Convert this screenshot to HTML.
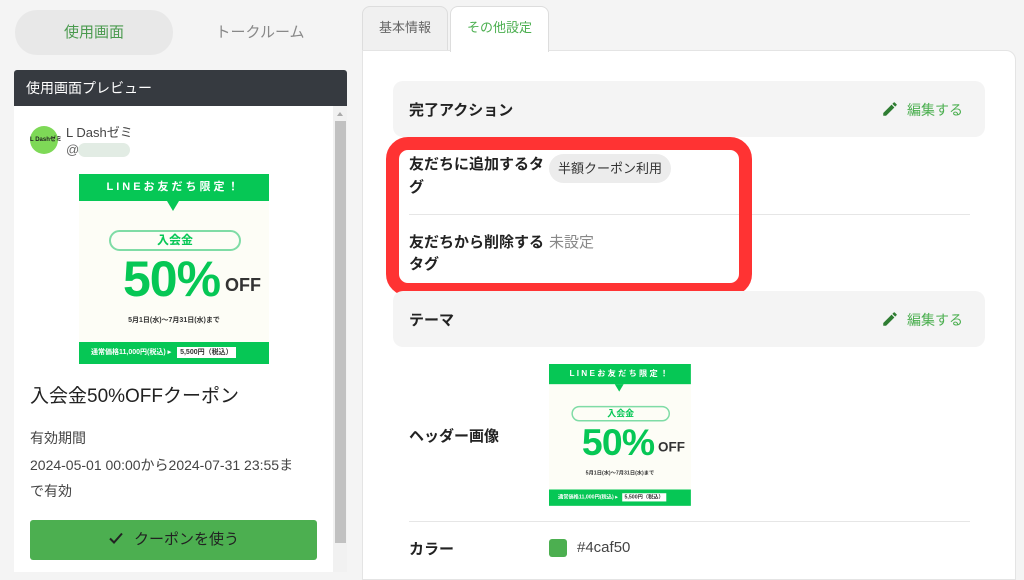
<!DOCTYPE html>
<html><head><meta charset="utf-8"><style>
*{box-sizing:border-box;margin:0;padding:0}
body{width:1024px;height:572px;overflow:hidden;background:#f4f4f4;font-family:"Liberation Sans","Noto Sans CJK JP",sans-serif;color:#333;position:relative}
.a{position:absolute;white-space:nowrap}
.bn{position:absolute;width:190px;height:190px;background:#fdfdf6;overflow:hidden;transform-origin:0 0}
.bn .t{position:absolute;left:0;top:0;width:190px;height:27px;background:#06c755;color:#fff;font-size:11px;font-weight:bold;letter-spacing:3px;text-align:center;line-height:27px}
.bn .tri{position:absolute;left:88px;top:27px;border-left:6px solid transparent;border-right:6px solid transparent;border-top:10px solid #06c755}
.bn .p{position:absolute;left:30px;top:56px;width:132px;height:21px;border:2px solid #7fdca6;border-radius:11px;color:#06c755;font-size:12px;font-weight:bold;text-align:center;line-height:17px}
.bn .big{position:absolute;left:44px;top:76px;font-size:50px;font-weight:bold;color:#06c755;letter-spacing:-1px}
.bn .off{position:absolute;left:146px;top:101px;font-size:18px;font-weight:bold;color:#333}
.bn .d{position:absolute;left:0;width:190px;top:141px;font-size:7px;font-weight:bold;text-align:center;color:#333}
.bn .b{position:absolute;left:0;top:168px;width:190px;height:22px;background:#06c755;color:#fff;font-size:7px;font-weight:bold;line-height:22px;padding-left:12px}
.bn .b span{background:#fff;color:#333;padding:2px 3px;margin-left:4px}
.lbl{font-size:15px;font-weight:bold;color:#222}
.edit{color:#4caf50;font-size:14px}
</style></head><body>
<div class="a" style="left:15px;top:10px;width:158px;height:45px;background:#e8e8e8;border-radius:22px;text-align:center;line-height:45px;color:#4a9a4e;font-size:15px">使用画面</div>
<div class="a" style="left:190px;top:10px;width:140px;height:45px;text-align:center;line-height:45px;color:#888;font-size:15px">トークルーム</div>
<div class="a" style="left:14px;top:70px;width:333px;height:36px;background:#363a40;border-radius:3px 3px 0 0;color:#fff;font-size:14px;line-height:36px;padding-left:12px">使用画面プレビュー</div>
<div class="a" style="left:14px;top:106px;width:319px;height:466px;background:#fff"></div>
<div class="a" style="left:333px;top:106px;width:14px;height:466px;background:#f1f1f1"></div>
<div class="a" style="left:335px;top:121px;width:11px;height:422px;background:#c1c1c1"></div>
<div class="a" style="left:337px;top:112px;border-left:3px solid transparent;border-right:3px solid transparent;border-bottom:4px solid #aaa"></div>
<div class="a" style="left:30px;top:126px;width:28px;height:28px;border-radius:50%;background:#7ed957;font-size:6px;font-weight:bold;text-align:center;line-height:28px;color:#222">L Dashゼミ</div>
<div class="a" style="left:66px;top:122px;font-size:13px;color:#444">L Dashゼミ</div>
<div class="a" style="left:66px;top:142px;font-size:13px;color:#666">@</div>
<div class="a" style="left:78px;top:143px;width:52px;height:14px;border-radius:7px;background:#e2ece4"></div>
<div class="bn" style="left:79px;top:174px">
<div class="t">LINEお友だち限定！</div><div class="tri"></div><div class="p">入会金</div>
<div class="big">50%</div><div class="off">OFF</div><div class="d">5月1日(水)〜7月31日(水)まで</div>
<div class="b">通常価格11,000円(税込) ▸ <span>5,500円（税込）</span></div></div>
<div class="a" style="left:30px;top:381px;font-size:19px;color:#222">入会金50%OFFクーポン</div>
<div class="a" style="left:30px;top:428px;font-size:14px;color:#444">有効期間</div>
<div class="a" style="left:30px;top:455px;font-size:14px;color:#444">2024-05-01 00:00から2024-07-31 23:55ま</div>
<div class="a" style="left:30px;top:481px;font-size:14px;color:#444">で有効</div>
<div class="a" style="left:30px;top:520px;width:287px;height:40px;background:#4caf50;border-radius:3px;text-align:center;line-height:40px;font-size:15px;color:#222"><svg width="16" height="14" viewBox="0 0 16 14" style="vertical-align:-1px;margin-right:10px"><path d="M2 7.5l4 4L14 2.5" fill="none" stroke="#222" stroke-width="2"/></svg>クーポンを使う</div>
<div class="a" style="left:362px;top:6px;width:86px;height:46px;background:#f0f0f0;border:1px solid #ddd;border-radius:8px 8px 0 0;text-align:center;line-height:42px;font-size:13px;color:#666">基本情報</div>
<div class="a" style="left:362px;top:50px;width:654px;height:530px;background:#fff;border:1px solid #e4e4e4;border-radius:0 10px 0 0"></div>
<div class="a" style="left:450px;top:6px;width:99px;height:46px;background:#fff;border:1px solid #ddd;border-bottom:none;border-radius:8px 8px 0 0;text-align:center;line-height:42px;font-size:13px;color:#4caf50">その他設定</div>
<div class="a" style="left:393px;top:81px;width:592px;height:56px;background:#f4f4f4;border-radius:10px"></div>
<div class="a lbl" style="left:409px;top:99px">完了アクション</div>
<svg class="a" style="left:881px;top:100px" width="18" height="18" viewBox="0 0 24 24"><path fill="#2e7d32" d="M3 17.25V21h3.75L17.81 9.94l-3.75-3.75L3 17.25zM20.71 7.04a1 1 0 0 0 0-1.41l-2.34-2.34a1 1 0 0 0-1.410 0l-1.83 1.83 3.75 3.75 1.83-1.83z"/></svg>
<div class="a edit" style="left:907px;top:100px">編集する</div>
<div class="a lbl" style="left:409px;top:153px">友だちに追加するタ</div>
<div class="a lbl" style="left:409px;top:176px">グ</div>
<div class="a" style="left:549px;top:154px;width:122px;height:29px;background:#ececec;border-radius:15px;text-align:center;line-height:29px;font-size:13px;color:#333">半額クーポン利用</div>
<div class="a" style="left:409px;top:214px;width:561px;height:1px;background:#e6e6e6"></div>
<div class="a lbl" style="left:409px;top:231px">友だちから削除する</div>
<div class="a lbl" style="left:409px;top:253px">タグ</div>
<div class="a" style="left:549px;top:231px;font-size:15px;color:#888">未設定</div>
<div class="a" style="left:386px;top:137px;width:366px;height:159px;border:13px solid #ff3333;border-radius:22px"></div>
<div class="a" style="left:393px;top:291px;width:592px;height:56px;background:#f4f4f4;border-radius:10px"></div>
<div class="a lbl" style="left:409px;top:309px">テーマ</div>
<svg class="a" style="left:881px;top:310px" width="18" height="18" viewBox="0 0 24 24"><path fill="#2e7d32" d="M3 17.25V21h3.75L17.81 9.94l-3.75-3.75L3 17.25zM20.71 7.04a1 1 0 0 0 0-1.41l-2.34-2.34a1 1 0 0 0-1.41 0l-1.83 1.83 3.75 3.75 1.83-1.83z"/></svg>
<div class="a edit" style="left:907px;top:310px">編集する</div>
<div class="a lbl" style="left:409px;top:425px">ヘッダー画像</div>
<div class="bn" style="left:549px;top:364px;transform:scale(0.747)">
<div class="t">LINEお友だち限定！</div><div class="tri"></div><div class="p">入会金</div>
<div class="big">50%</div><div class="off">OFF</div><div class="d">5月1日(水)〜7月31日(水)まで</div>
<div class="b">通常価格11,000円(税込) ▸ <span>5,500円（税込）</span></div></div>
<div class="a" style="left:409px;top:521px;width:561px;height:1px;background:#e6e6e6"></div>
<div class="a lbl" style="left:409px;top:538px">カラー</div>
<div class="a" style="left:549px;top:539px;width:18px;height:18px;background:#4caf50;border-radius:3px"></div>
<div class="a" style="left:577px;top:539px;font-size:15px;color:#444">#4caf50</div>
</body></html>
